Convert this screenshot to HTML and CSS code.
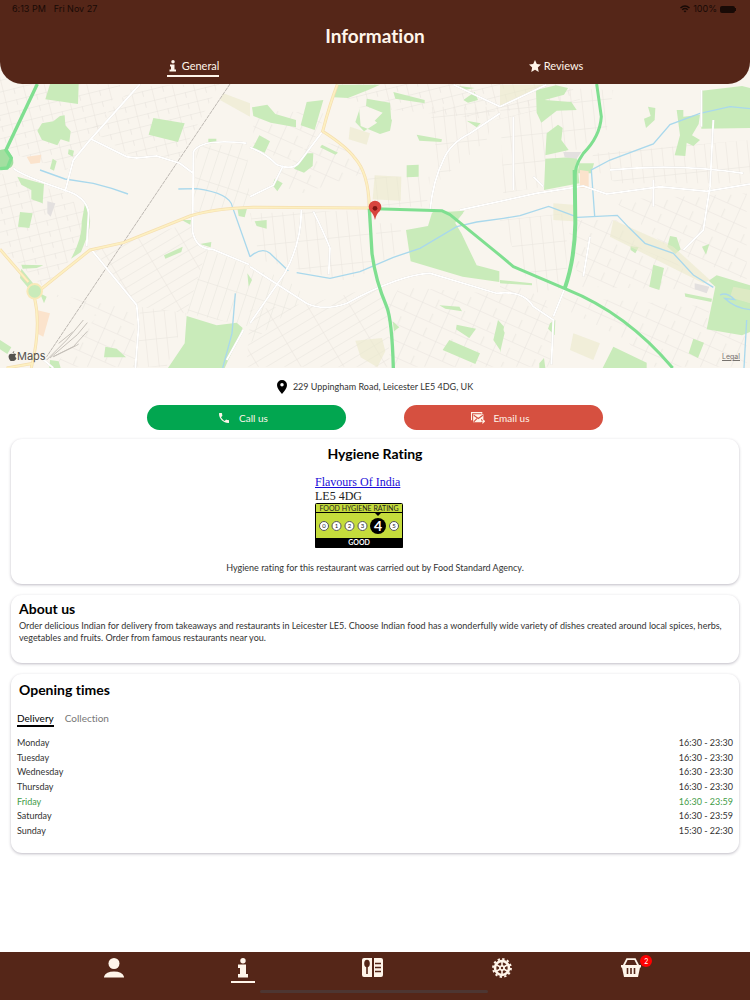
FILE: index.html
```
<!DOCTYPE html>
<html lang="en">
<head>
    <meta charset="UTF-8">
    <meta name="viewport" content="width=device-width, initial-scale=1.0">
    <title>Information</title>
    <link rel="stylesheet" href="styles.css">
</head>
<body>
    <header class="header">
        <div class="status-bar">
            <span class="status-time">6:13 PM</span>
            <span>Fri Nov 27</span>
            <span class="status-right">
                <svg width="10" height="8" viewBox="0 0 20 15" fill="none" stroke="currentColor" stroke-width="3"><path d="M1 5.500q9-8 18 0M4.500 9q5.500-5 11 0"/><path d="M7 11.500q3-2.500 6 0l-3 3z" fill="currentColor" stroke="none"/></svg>
                <span>100%</span>
                <svg width="17" height="7" viewBox="0 0 17 7" fill="currentColor"><rect width="15" height="7" rx="2"/><rect x="15" y="2" width="1" height="3"/></svg>
            </span>
        </div>
        <h1>Information</h1>
        <nav class="tabs">
            <a href="#general" class="tab active">
                <svg width="8" height="12" viewBox="0 0 16 24" fill="currentColor"><circle cx="8" cy="3.500" r="3.500"/><path d="M2 9h9v10h3v4H1v-4h3v-6H2z"/></svg>
                General
            </a>
            <a href="#reviews" class="tab">
                <svg width="12" height="12" viewBox="0 0 24 24" fill="currentColor"><path d="M12 0l3.600 8.200 8.400.900-6.300 5.900 1.800 9L12 19.300 4.500 24l1.800-9L0 9.100l8.400-.900z"/></svg>
                Reviews
            </a>
        </nav>
    </header>

    <section class="map">
        <svg class="map-canvas" viewBox="0 -60 2250 924" preserveAspectRatio="xMidYMid slice">
            <defs>
                <pattern id="streets-a" width="62" height="34" patternUnits="userSpaceOnUse" patternTransform="rotate(-14)"><path d="M0 1h62M1 0v34M34 0v17"/></pattern>
                <pattern id="streets-b" width="30" height="96" patternUnits="userSpaceOnUse" patternTransform="rotate(18)"><path d="M0 1h30M1 0v96"/></pattern>
                <pattern id="streets-c" width="110" height="28" patternUnits="userSpaceOnUse" patternTransform="rotate(-31)"><path d="M0 1h110M1 0v28"/></pattern>
                <pattern id="streets-d" width="32" height="82" patternUnits="userSpaceOnUse" patternTransform="rotate(-6)"><path d="M0 1h32M1 0v82"/></pattern>
                <pattern id="streets-e" width="84" height="46" patternUnits="userSpaceOnUse" patternTransform="rotate(24)"><path d="M0 1h84M1 0v46M44 20v26"/></pattern>
            </defs>
            <rect y="-60" width="2250" height="924" class="land"/>

            <!-- side streets -->
            <g class="grid">
                <path fill="url(#streets-a)" d="M0 -60H400L280 170 200 270 0 210zM0 280l190 60 70 60-10 100-120 120L0 500z"/>
                <path fill="url(#streets-a)" d="M270 150L400 20 660 10 540 230 400 230zM1000 0l700 0 40 60-250 60-200-20-230-20z"/>
                <path fill="url(#streets-b)" d="M590 200l150-10 10 190-170 20zM600 500l150 60v180l-190-40 60-190zM760 570l90 20 70 60-170 140-10-200z"/>
                <path fill="url(#streets-c)" d="M280 510l290-80 20 60 30 20-60 190-150-20zM750 690l180-20 200-50 30 60 10 180-430 0z"/>
                <path fill="url(#streets-d)" d="M420 680l140 20-60 160-90 0zM750 400l360-10 20 180-100 30-250-60zM1120 430l80 0 10 80-60 30zM1100 290l190 0-10 90-180 0zM1290 80l200 0-30 100-140 120z"/>
                <path fill="url(#streets-d)" d="M1500 60l110 0 20 260-120 20zM1600 20l240 10-20 120-200 130zM1780 220l470-40v130l-400 0-80-50zM1500 420l200-20 0 220-100 20z"/>
                <path fill="url(#streets-e)" d="M1840 360l400-20 0 260-230-90zM1700 420l150 0 80 90 100 40 90 80-380-10zM1690 650l440 30-10 60 120 30v90l-300 0-60-80-200-100z"/>
                <path fill="url(#streets-e)" d="M1200 620l260 20 180 20 20 200-490 0-10-180zM1500 600l100 40 60 70-10 150-150-20zM760 90l210 10-10 60-90 80-110-30zM940 180l100 20 50 80-180 60-100-30zM150 640l250 50 10 170-250 0 130-150z"/>
            </g>

            <!-- parks -->
            <g class="park">
                <path d="M150 12h86l-2 60-98-14zM180 108l14-2 2 30 16 18-4 32-26-8-10 18-46-16-14-28 14-22 34-6zM206 208l16 4-4 18-14-8zM158 236l12 8-8 28-12-6zM52 290l80 22-4 58-34-12v-28l-30-16zM60 396l38 4-10 44-34-4z"/>
                <path d="M460 114l94 16-20 56-88-22zM625 176l24 0v12l-24-2zM255 370q26 40 8 96l-20 50-30 20q34-60 32-110zM492 526l56-26-4 16-48 20zM545 420l28 0-2 14zM600 492l34-6-2 16zM64 554l66 2-20 8-42 2zM64 566l40 50-14 14-30-36zM0 780l34 22-12 20-22-14zM316 800l34 6 28 26-66 0zM150 840l26 4 6 20-34 0zM120 640l20 10-8 20z"/>
                <path d="M560 708l90 28 60-8 18 16-20 46-34 74-170 0 50-74zM712 384l30-2-8 30-18-4zM742 580l14 20-10 20z"/>
                <path d="M756 82l46-8 24 28 62 18 0 22-76-14-52-20zM920 66l50-6-26 90-42-14zM778 166l32 18-16 34-36-14zM966 194l48 24-8 6-46-22zM940 220l-2 38-26 20-30-12 36-46zM824 296l24 14-16 24-14-18zM1010 14l130 0-30 14-66 26-42-2zM1180 36l94 24v10l-88-14z"/>
                <path d="M1080 84l-14 42 26 28 52-34 10-24 22 24-6 32-30 10-58-24-4-44zM1100 56l70 12 4 56-18 24-32-26 24-24-50-20zM1220 256l36-2 0 36-36 2zM1250 164l76 14-2 8-66-4zM1390 60l34-24 10 24-30 8zM1400 122l42 8-12 12zM1360 16l64 8-30 6z"/>
                <path d="M1218 450l66-12 12-40 98-6-30 34 20 34 46 96 68 18 0 32-110-16-156-46zM1290 392l100 6-24 30-30-8zM1318 676l60 4 8 14-50-8zM1370 734l58 12-20 28-40-26zM1348 780l92 40-14 32-98-42zM1494 720l18 20-12 70-20-30zM1178 724l20 18-16 12zM764 424l36-4 0 26-30-8z"/>
                <path d="M1608 30l60-14 36 8-12 20-58 16 80 6 16 24-60 2-46 36-14-30zM1640 160l34-26 14 10-4 36 22 30-70 16zM1636 236l94-6 8 80-106 20zM1738 250l44 0-8 30-42 0zM1944 80l22 4-2 36-26 24-6-28 20-8zM2030 90l20 0 0 20 50-6-4 28-20 34 24 14-20 18-20-10-4 40-32-2 16-60zM2106 32l120-14 24 6v120l-146 2z"/>
                <path d="M1500 600l96 10 0 6-96-6zM1892 498l24 4-10 18-14-10zM2010 468l20 4 12 36-16 14-24-22zM1960 554l32 10-14 66-30-10zM2054 640l82 16-2 10-78-16zM2126 602l24-16 100 30v140l-24 10-106-18 26-128zM2080 776l32 12-18 46-28-14zM1840 800l100 48 0 16-132 0zM1650 730l16-10-2 46-20-20zM1500 728l14 30-14 60zM2106 500l22-8-10 32zM1618 850l14-16 4 30-18 0z"/>
            </g>
            <g class="field">
                <path d="M1124 286l80 4-2 72-84-4zM1050 140l60 20-10 34-54-16zM1066 782l80-8 10 40-24 48-50-30zM1500 14l130 0-130 70zM1840 420l180 80 110 100-20 10-280-140zM1720 760l80 30-20 50-70-30zM670 40l80 30v40l-90-50zM1660 370l60 4 0 50-60-4zM2200 620l50 10v40l-60-18z"/>
            </g>
            <path class="built" d="M80 230l44-6-4 24-28 4zM1740 270l26 4 0 50-26 0zM110 690l40 10-20 70-20-10z"/>
            <path class="works" d="M1690 216l54 0-14 20-36-4zM2084 610l44 10-8 20-36-12zM142 364l24 6-14 40-10-10z"/>

            <!-- water -->
            <g class="water">
                <path d="M120 270L195 297 280 310 335 325 384 342M535 327L590 326Q690 340 697 380L750 530M706 640L696 760 668 864"/>
                <path d="M750 530q36-30 60-10l55 52M890 578L990 595 1080 575 1180 532 1260 505 1370 440 1430 426 1510 415 1560 407 1646 379 1720 407 1732 412 1852 406 1886 442 1935 490 2020 520 2080 585 2140 622"/>
                <path d="M1784 408L1774 270 1830 240 1960 192 2010 134 2100 100 2190 80 2250 86M2160 645q20-10 44 14l-30-4q30 30 76 34M2240 720l-8 144"/>
            </g>

            <!-- railway -->
            <path class="rail" d="M690 12L375 480 140 830"/>
            <path class="siding" d="M140 840L200 780 250 720M150 834L232 764 262 728M160 830l60-30 42-46M160 830l70-34 6-4M176 790l42-34"/>

            <!-- local roads -->
            <g class="road">
                <path d="M420 12L270 180 220 240 195 335M40 265q30 24 150 64 70 20 76 70l-6 100M275 178L380 230 410 234 470 228 540 250 580 280M740 190q-140-16-160 26l-2 240q10 50 60 52l110 46M275 510L410 675 416 740 406 864"/>
                <path d="M750 202q50 20 80 52 50 20 70-10L968 154M750 350l70-34 30-60M904 390q0 100-50 190L750 730M750 560l170 110q50 24 120 0 160-86 250-90l200 60q80-10 110 40l60 40-6 134M940 394q30 60 50 110l-4 80M1290 390q10-90 40-150 20-50 80-80L1500 100M1360 14L1500 80 1640 14M1380 390l230-50 140-22 70 24 160-22 140 14 130-22M1660 710l34-84M2104 30v110M730 750L680 840M120 830l40 34"/>
                <path d="M1830 270q200-20 400 10M1600 290l30 30M1540 110v220M1960 300v80M2140 120l-10 200-20 130-60 60M1770 470l-20 120"/>
            </g>

            <!-- main roads -->
            <g class="main-casing"><path d="M0 508L85 606M120 630L270 510 370 488 570 408Q640 386 760 382L1110 384M104 656Q124 740 94 864M1012 14Q990 70 968 154 1040 200 1065 235 1105 280 1108 380M100 850l-80 14"/></g>
            <g class="main"><path d="M0 508L85 606M120 630L270 510 370 488 570 408Q640 386 760 382L1110 384M104 656Q124 740 94 864M1012 14Q990 70 968 154 1040 200 1065 235 1105 280 1108 380M100 850l-80 14"/></g>
            <circle cx="104" cy="634" r="22" class="roundabout"/>

            <!-- trunk roads -->
            <path class="trunk-fill" d="M0 210l20-4q34 40 10 58l-30 4z"/>
            <g class="trunk">
                <path d="M112 12L18 210 34 234 22 264 0 266" stroke-width="10"/>
                <path d="M1108 386L1116 520Q1126 600 1160 680 1176 720 1180 864" stroke-width="10"/>
                <path d="M1125 386L1325 392 1350 404 1500 526 1540 560 1700 628Q1880 700 2018 864" stroke-width="9"/>
                <path d="M1790 12L1804 110Q1800 170 1750 220 1720 260 1724 310" stroke-width="9"/>
                <path d="M1724 270L1726 430Q1724 540 1694 626" stroke-width="12"/>
            </g>

            <path class="pin" d="M1125 420q-4-18-14-26a19 19 0 1 1 28 0q-10 8-14 26z"/>
            <circle cx="1125" cy="385" r="7" class="pin-dot"/>
        </svg>
        <span class="map-brand"><svg width="9" height="10" viewBox="0 0 18 20" fill="currentColor"><path d="M12.500 0q.300 3-3.500 4.500Q9 1.500 12.500 0zM9 6q4-2 7.500.700-4.500 4 .500 7.800-3 7-7 5-4 2-6.500-1.500Q-1 11 3 6.500 5.500 4.500 9 6z"/></svg>Maps</span>
        <a href="#legal" class="map-legal">Legal</a>
    </section>

    <main>
        <p class="address">
            <svg width="10" height="14" viewBox="0 0 20 28"><path d="M10 0a10 10 0 0 1 10 10q0 7-10 18Q0 17 0 10A10 10 0 0 1 10 0zm0 6a3.500 3.500 0 1 0 0 7 3.500 3.500 0 0 0 0-7z"/></svg>
            229 Uppingham Road, Leicester LE5 4DG, UK
        </p>

        <div class="buttons">
            <button type="button" class="call">
                <svg width="10" height="10" viewBox="3 3 18 18" fill="currentColor"><path d="M6.620 10.790c1.440 2.830 3.760 5.140 6.590 6.590l2.200-2.200c.27-.27.67-.36 1.020-.24 1.120.37 2.330.57 3.570.57.55 0 1 .45 1 1V20c0 .55-.45 1-1 1C10.610 21 3 13.390 3 4c0-.55.45-1 1-1h3.500c.55 0 1 .45 1 1 0 1.250.2 2.450.57 3.570.11.35.03.74-.25 1.020z"/></svg>
                Call us
            </button>
            <button type="button" class="email">
                <svg width="14" height="12" viewBox="0 0 26 22" fill="none" stroke="currentColor" stroke-width="2"><path d="M1 15V1h19v2"/><path d="M4 4h19v9h-4v6H4z" fill="currentColor" stroke="none"/><path class="flap" d="M5 6l8.500 6L22 6M5 18l6-6"/><path d="M17 17h8M21 13l4 4-4 4"/></svg>
                Email us
            </button>
        </div>

        <section class="card hygiene">
            <h2>Hygiene Rating</h2>
            <div class="rating">
                <a href="#rating">Flavours Of India</a>
                <span>LE5 4DG</span>
                <svg width="88" height="45" viewBox="0 0 88 45">
                    <rect x="0.500" y="0.500" width="87" height="44" rx="1" class="rating-box"/>
                    <path d="M0 9.500h88" stroke="#000"/>
                    <path d="M60 10h6l-3 3z"/>
                    <path d="M0 35h88v9q0 1-1 1H1q-1 0-1-1z"/>
                    <g class="rating-ring"><circle cx="9" cy="23" r="4.500"/><circle cx="21.500" cy="23" r="4.500"/><circle cx="34.500" cy="23" r="4.500"/><circle cx="47.500" cy="23" r="4.500"/><circle cx="79" cy="23" r="4.500"/></g>
                    <circle cx="63" cy="23" r="8"/>
                    <g class="rating-text">
                        <text x="44" y="8" class="rating-title">FOOD HYGIENE RATING</text>
                        <text x="9" y="25">0</text><text x="21.500" y="25">1</text><text x="34.500" y="25">2</text><text x="47.500" y="25">3</text><text x="79" y="25">5</text>
                        <text x="63" y="28" class="rating-score">4</text>
                        <text x="44" y="42" class="rating-word">GOOD</text>
                    </g>
                </svg>
            </div>
            <p>Hygiene rating for this restaurant was carried out by Food Standard Agency.</p>
        </section>

        <section class="card about">
            <h2>About us</h2>
            <p>Order delicious Indian for delivery from takeaways and restaurants in Leicester LE5. Choose Indian food has a wonderfully wide variety of dishes created around local spices, herbs, vegetables and fruits. Order from famous restaurants near you.</p>
        </section>

        <section class="card opening">
            <h2>Opening times</h2>
            <div class="modes">
                <button type="button" class="mode active">Delivery</button>
                <button type="button" class="mode">Collection</button>
            </div>
            <table>
                <tr><th>Monday</th><td>16:30 - 23:30</td></tr>
                <tr><th>Tuesday</th><td>16:30 - 23:30</td></tr>
                <tr><th>Wednesday</th><td>16:30 - 23:30</td></tr>
                <tr><th>Thursday</th><td>16:30 - 23:30</td></tr>
                <tr class="today"><th>Friday</th><td>16:30 - 23:59</td></tr>
                <tr><th>Saturday</th><td>16:30 - 23:59</td></tr>
                <tr><th>Sunday</th><td>15:30 - 22:30</td></tr>
            </table>
        </section>
    </main>

    <nav class="bottom-nav">
        <a href="#account" aria-label="Account">
            <svg width="20" height="20" viewBox="0 0 20 20" fill="currentColor"><circle cx="10" cy="5.500" r="5.500"/><path d="M0 19.500v-1Q2 13.500 10 13.500t10 5v1z"/></svg>
        </a>
        <a href="#general" class="active" aria-label="Information">
            <svg width="12" height="20" viewBox="0 0 12 20" fill="currentColor"><circle cx="6" cy="2.700" r="2.700"/><path d="M1 6.500h8V16h2v3.500H1V16h2v-6H1z"/></svg>
        </a>
        <a href="#menu" aria-label="Menu">
            <svg width="22" height="20" viewBox="0 0 22 20"><path fill="currentColor" d="M2 0h8v19H2q-2 0-2-2V2q0-2 2-2zM12 0h7q2 0 2 2v15q0 2-2 2h-7z"/><g class="cut"><ellipse cx="5" cy="5.500" rx="2" ry="3"/><path d="M5 7v9M13 5.500h6M13 9.500h6M13 13.500h6"/></g></svg>
        </a>
        <a href="#settings" aria-label="Settings">
            <svg width="20" height="20" viewBox="0 0 20 20" fill="none" stroke="currentColor"><circle cx="10" cy="10" r="7" stroke-width="2.600"/><circle cx="10" cy="10" r="8.900" stroke-width="2" stroke-dasharray="2.300 2.360"/><path d="M10 3v14M4 6.500l12 7M16 6.500l-12 7" stroke-width="1.600"/><circle cx="10" cy="10" r="2.500" fill="currentColor"/><circle cx="10" cy="10" r="1.200" class="hub"/></svg>
        </a>
        <a href="#basket" class="basket" aria-label="Basket">
            <svg width="20" height="20" viewBox="0 0 20 20"><path d="M2.500 8L6 1.200h8L17.500 8" fill="none" stroke="currentColor" stroke-width="1.800"/><path d="M0 7h20v2.500h-1L17 19H3L1 9.500H0z" fill="currentColor"/><path class="cut" d="M6.500 10v6M10 10v6M13.500 10v6"/></svg>
            <span class="badge">2</span>
        </a>
    </nav>
</body>
</html>
```
FILE: styles.css
```
* {
    box-sizing: border-box;
}

body {
    margin: 0;
    min-height: 100vh;
    display: flex;
    flex-direction: column;
    font-family: Lato, "Noto Sans", sans-serif;
    font-size: 9px;
    line-height: 12px;
    font-variant-ligatures: none;
    color: #333;
    background: #fff;
}

svg {
    display: block;
}

h1, h2, p {
    margin: 0;
}

a {
    color: inherit;
    text-decoration: none;
}

.header {
    position: relative;
    z-index: 1;
    height: 84px;
    padding-top: 3px;
    color: #fff5ea;
    background: #552618;
    border-radius: 0 0 22px 22px;
}

.status-bar {
    display: flex;
    align-items: center;
    gap: 8px;
    padding: 0 13px 0 12px;
    font-family: Inter, sans-serif;
    font-size: 9px;
    color: #180a06;
}

.status-right {
    display: flex;
    align-items: center;
    gap: 3px;
    margin-left: auto;
}

h1 {
    margin-top: 9px;
    font-size: 19px;
    line-height: 24px;
    text-align: center;
}

.tabs {
    display: flex;
    justify-content: space-around;
    padding: 10px 12px 0;
}

.tabs .tab {
    display: flex;
    align-items: center;
    gap: 3px;
    height: 19px;
    padding-bottom: 2px;
    font-size: 11px;
    border-bottom: 2px solid transparent;
}

.tabs .active {
    gap: 5px;
    padding-left: 2px;
    border-color: #fff5ea;
}

/* map */
.map {
    position: relative;
    margin-top: -24px;
}

.map-canvas {
    width: 100%;
    height: auto;
}

.land { fill: #f9f5ee; }
.grid { stroke: none; }
pattern path { fill: none; stroke: #e9e5de; stroke-width: 2; }
.park { fill: #c9ebba; }
.field { fill: #ebeacb; opacity: 0.6; }
.built { fill: #fbe3cc; }
.works { fill: #e3e0df; }
.water { fill: none; stroke: #a9d8ec; stroke-width: 4; }
.rail { fill: none; stroke: #bdb8b2; stroke-width: 3; stroke-dasharray: 12 2; }
.siding { fill: none; stroke: #c6c1ba; stroke-width: 3; }
.road { fill: none; stroke: #fff; stroke-width: 6; filter: drop-shadow(0 0 1px #cfcac2); }
.main-casing { fill: none; stroke: #f5deb0; stroke-width: 9; }
.main { fill: none; stroke: #fdf0c1; stroke-width: 5; }
.roundabout { fill: #c9ebba; stroke: #f8e9b8; stroke-width: 6; }
.trunk { fill: none; stroke: #7fdf90; stroke-linejoin: round; }
.trunk-fill { fill: #a3dfa0; }
.pin { fill: #d8453e; }
.pin-dot { fill: #7c1512; }

.map-brand {
    position: absolute;
    left: 8px;
    bottom: 5px;
    display: flex;
    align-items: center;
    font-family: Inter, sans-serif;
    font-size: 11px;
    line-height: 14px;
    color: #55524e;
}

.map-legal {
    position: absolute;
    right: 10px;
    bottom: 5px;
    font-family: Inter, sans-serif;
    font-size: 7px;
    color: #77736e;
    text-decoration: underline;
}

/* contact */
.address {
    display: flex;
    align-items: center;
    justify-content: center;
    gap: 6px;
    padding: 12px 0 11px;
}

.address path {
    fill: #000;
    fill-rule: evenodd;
}

.buttons {
    display: flex;
    justify-content: center;
    gap: 58px;
    margin-bottom: 9px;
}

button {
    font-family: inherit;
    font-variant-ligatures: none;
    cursor: pointer;
    border: none;
}

.call,
.email {
    display: flex;
    align-items: center;
    justify-content: center;
    gap: 10px;
    width: 199px;
    height: 25px;
    padding: 0 12px 0 6px;
    font-size: 10px;
    color: #fff5ea;
    border-radius: 13px;
}

.call {
    background: #02a650;
}

.email {
    gap: 8px;
    background: #d65040;
}

.flap {
    stroke: #d65040;
}

/* cards */
.card {
    margin: 0 11px 11px;
    background: #fff;
    border-radius: 11px;
    box-shadow: 0 1px 3px rgba(40, 30, 60, 0.3);
}

h2 {
    font-size: 14px;
    line-height: 16px;
    color: #000;
}

.hygiene {
    display: flex;
    flex-direction: column;
    align-items: center;
    padding: 7px 8px 10px;
}

.rating {
    display: flex;
    flex-direction: column;
    width: 120px;
    margin: 13px 0 14px;
    font-family: "Liberation Serif", serif;
    font-size: 12px;
    line-height: 14px;
    color: #222;
}

.rating a {
    color: #1a0dd8;
    text-decoration: underline;
}

.rating-box { fill: #c5dc3c; stroke: #000; }
.rating-ring { fill: #fff; stroke: #555; }
.rating-text { font-family: Lato, sans-serif; font-size: 6px; text-anchor: middle; fill: #222; }
.rating-title { font-size: 7px; }
.rating-score { font-size: 14px; font-weight: bold; fill: #fff; }
.rating-word { font-size: 7px; font-weight: bold; fill: #fff; }

.about {
    padding: 6px 8px 19px;
}

.about p {
    margin-top: 3px;
}

.opening {
    padding: 8px 6px 15px;
}

.opening h2 {
    padding-left: 2px;
}

.modes {
    display: flex;
    gap: 11px;
    margin: 12px 0 9px;
}

.mode {
    padding: 1px 0 0;
    font-size: 10px;
    line-height: 14px;
    color: #777;
    background: none;
    border-bottom: 2px solid transparent;
}

.mode.active {
    color: #000;
    border-color: #000;
}

table {
    width: 100%;
    height: 102px;
    border-spacing: 0;
    border-collapse: collapse;
}

th, td {
    padding: 0;
    font-weight: normal;
    text-align: left;
}

td {
    text-align: right;
}

.today {
    color: #3f9c48;
}

/* bottom bar */
.bottom-nav {
    position: sticky;
    bottom: 0;
    display: flex;
    height: 48px;
    margin-top: auto;
    padding: 6px 54px 0 49px;
    color: #fff5ea;
    background: #552618;
}

.bottom-nav::after {
    content: "";
    position: absolute;
    left: 50%;
    bottom: 7px;
    width: 228px;
    height: 3px;
    margin-left: -115px;
    border-radius: 2px;
    background: #4d3632;
}

.bottom-nav a {
    position: relative;
    flex: 1;
    display: flex;
    flex-direction: column;
    align-items: center;
}

.bottom-nav .active::after {
    content: "";
    width: 24px;
    height: 2px;
    margin-top: 3px;
    background: currentColor;
}

.cut { fill: #552618; stroke: #552618; stroke-width: 1.6px; }
.hub { fill: #552618; stroke: none; }

.badge {
    position: absolute;
    top: -3px;
    left: 50%;
    width: 12px;
    height: 12px;
    margin-left: 9px;
    font-size: 7px;
    text-align: center;
    color: #fff;
    background: #f00;
    border-radius: 50%;
}
```
